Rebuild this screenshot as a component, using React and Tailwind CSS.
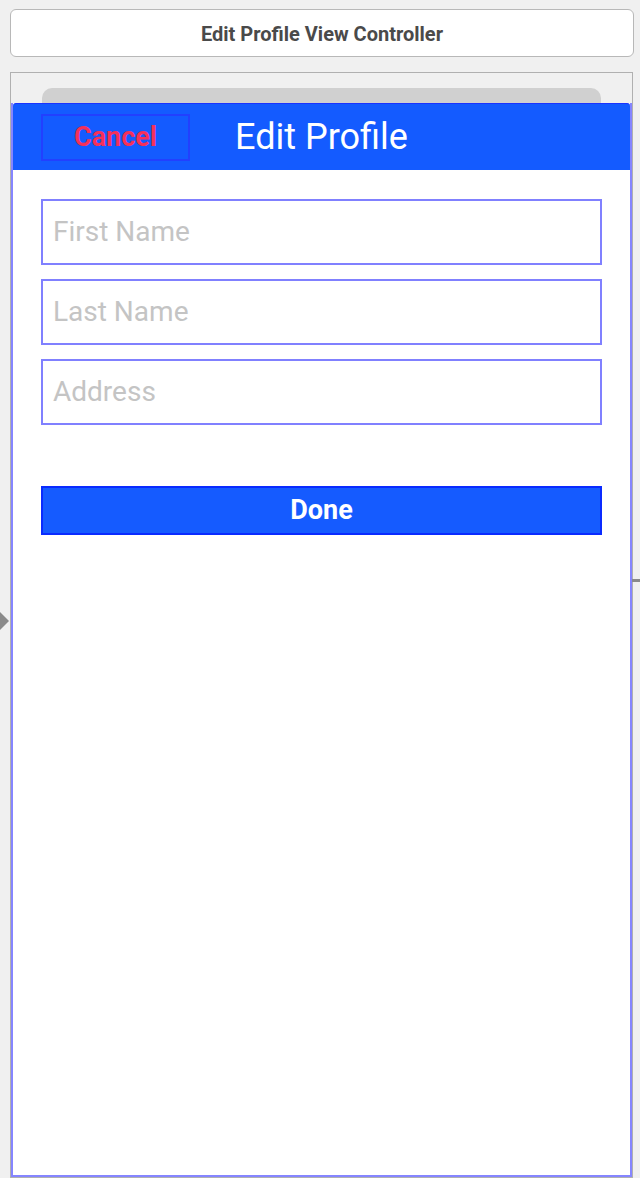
import React from "react";

const fields = ["First Name", "Last Name", "Address"];

const App = () => {
  return (
    <div className="relative min-h-[1178px] overflow-hidden bg-[#f0f0f0] pl-[10px] pt-[9px] font-['Roboto',sans-serif]">
      {/* Scene title */}
      <div className="flex h-[48px] w-[624px] items-center justify-center rounded-[6px] border border-[#b8b8b8] bg-white">
        <span className="pt-[1px] text-[20px] font-bold text-[#4a4a4a]">Edit Profile View Controller</span>
      </div>

      {/* Segue markers */}
      <div className="absolute left-0 top-[612px] h-0 w-0 border-y-[9px] border-l-[9px] border-y-transparent border-l-[#8a8a8a]" />
      <div className="absolute right-0 top-[579px] h-[3px] w-[8px] bg-[#8a8a8a]" />

      {/* Device frame */}
      <div className="mt-[15px] flex h-[1106px] w-[623px] flex-col border border-[#b0b0b0]">
        <div className="px-[31px] pt-[15px]">
          <div className="h-[15px] rounded-t-[10px] bg-[#d0d0d0]" />
        </div>

        <div className="flex flex-1 flex-col border-2 border-t-0 border-[#8585ff] bg-white">
          {/* Nav bar */}
          <div className="grid h-[67px] grid-cols-[1fr_auto_1fr] items-center rounded-t-[3px] border-t border-[#1a33ff] bg-[#145bff]">
            <div className="pl-[28px]">
              <button className="flex h-[47px] w-[149px] items-center justify-center border-2 border-[#2240ff] text-[27px] font-bold text-[#f5305a]">
                Cancel
              </button>
            </div>
            <div className="text-[36px] text-white">Edit Profile</div>
            <div />
          </div>

          {/* Form */}
          <div className="flex flex-col px-[28px] pt-[29px]">
            <div className="flex flex-col gap-[14px]">
              {fields.map((f) => (
                <div
                  key={f}
                  className="flex h-[66px] items-center border-2 border-[#8080ff] pl-[10px] text-[28px] text-[#c4c4c4]"
                >
                  {f}
                </div>
              ))}
            </div>

            <button className="mt-[61px] flex h-[49px] items-center justify-center border-2 border-[#0a2bff] bg-[#155bff] text-[27px] font-bold text-white">
              Done
            </button>
          </div>
        </div>
      </div>
    </div>
  );
};

export default App;
